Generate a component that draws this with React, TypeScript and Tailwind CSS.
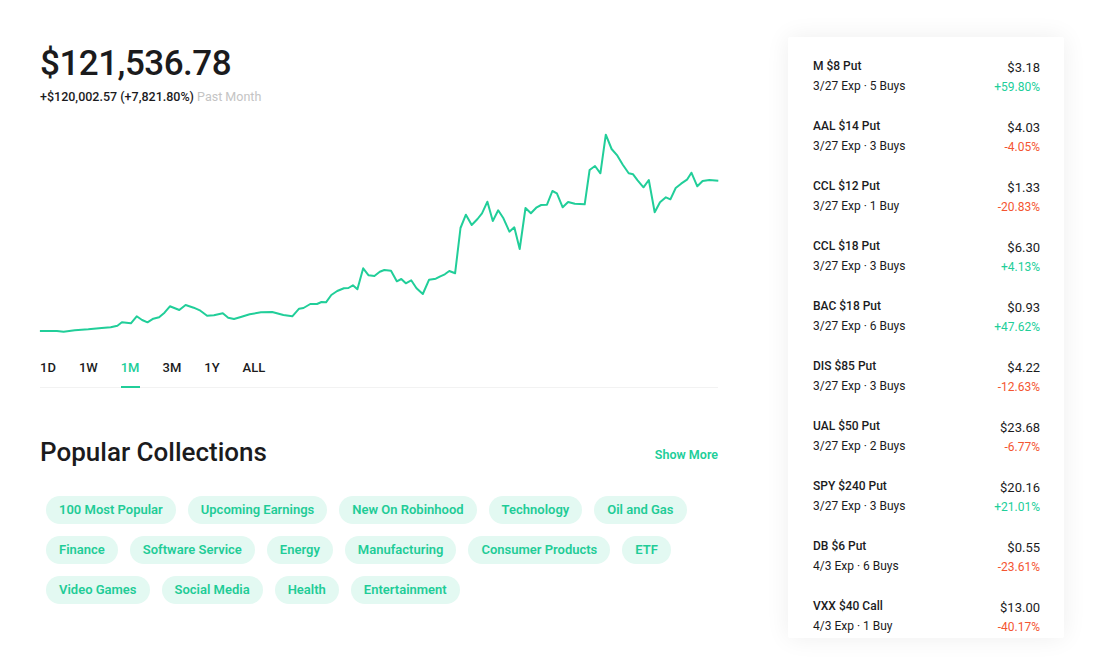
import React from "react";

// traced from the reference: x in 1/2.23 px, y in 1/3 px
const chartPoints: [number, number][] = [
  [22, 633], [60, 633], [75, 635], [100, 631], [130, 628], [160, 624], [180, 622], [195, 617], [205, 607],
  [225, 610], [238, 589], [250, 600], [262, 607], [275, 596], [288, 592], [300, 578], [312, 559], [333, 570],
  [347, 555], [365, 563], [380, 572], [395, 587], [410, 586], [430, 580], [442, 593], [455, 597], [470, 591],
  [490, 583], [515, 577], [540, 576], [565, 585], [585, 589], [600, 566], [610, 564], [625, 552], [640, 552],
  [650, 546], [660, 547], [672, 525], [685, 513], [700, 505], [710, 504], [720, 496], [730, 508], [743, 445],
  [755, 466], [768, 468], [780, 455], [790, 450], [805, 452], [818, 484], [828, 477], [838, 490], [850, 481],
  [862, 505], [876, 522], [890, 479], [905, 476], [915, 469], [925, 463], [935, 453], [948, 460], [960, 324],
  [972, 284], [985, 315], [998, 297], [1008, 280], [1020, 245], [1032, 303], [1044, 271], [1055, 293],
  [1069, 335], [1080, 322], [1092, 387], [1105, 264], [1117, 280], [1130, 262], [1140, 255], [1153, 254],
  [1165, 213], [1175, 220], [1188, 262], [1200, 246], [1215, 251], [1237, 253], [1248, 150], [1260, 138],
  [1272, 160], [1284, 44], [1297, 87], [1310, 107], [1322, 134], [1335, 160], [1345, 163], [1355, 181],
  [1368, 202], [1380, 180], [1393, 277], [1405, 247], [1418, 232], [1428, 238], [1440, 204], [1452, 191],
  [1465, 179], [1475, 158], [1488, 199], [1500, 183], [1515, 180], [1535, 182],
];

const ranges = ["1D", "1W", "1M", "3M", "1Y", "ALL"];

const collections = [
  ["100 Most Popular", "Upcoming Earnings", "New On Robinhood", "Technology", "Oil and Gas"],
  ["Finance", "Software Service", "Energy", "Manufacturing", "Consumer Products", "ETF"],
  ["Video Games", "Social Media", "Health", "Entertainment"],
];

interface Option {
  name: string;
  exp: string;
  price: string;
  change: string;
}

const options: Option[] = [
  { name: "M $8 Put", exp: "3/27 Exp · 5 Buys", price: "$3.18", change: "+59.80%" },
  { name: "AAL $14 Put", exp: "3/27 Exp · 3 Buys", price: "$4.03", change: "-4.05%" },
  { name: "CCL $12 Put", exp: "3/27 Exp · 1 Buy", price: "$1.33", change: "-20.83%" },
  { name: "CCL $18 Put", exp: "3/27 Exp · 3 Buys", price: "$6.30", change: "+4.13%" },
  { name: "BAC $18 Put", exp: "3/27 Exp · 6 Buys", price: "$0.93", change: "+47.62%" },
  { name: "DIS $85 Put", exp: "3/27 Exp · 3 Buys", price: "$4.22", change: "-12.63%" },
  { name: "UAL $50 Put", exp: "3/27 Exp · 2 Buys", price: "$23.68", change: "-6.77%" },
  { name: "SPY $240 Put", exp: "3/27 Exp · 3 Buys", price: "$20.16", change: "+21.01%" },
  { name: "DB $6 Put", exp: "4/3 Exp · 6 Buys", price: "$0.55", change: "-23.61%" },
  { name: "VXX $40 Call", exp: "4/3 Exp · 1 Buy", price: "$13.00", change: "-40.17%" },
];

function Chart() {
  const pts = chartPoints.map(([x, y]) => `${(x / 2.23 - 10).toFixed(1)},${(y / 3).toFixed(1)}`).join(" ");
  return (
    <svg viewBox="0 0 678 220" className="w-[678px] h-[220px] overflow-visible">
      <polyline points={pts} fill="none" stroke="#21ce99" strokeWidth={2} strokeLinejoin="round" />
    </svg>
  );
}

export default function App() {
  return (
    <div
      className="w-[1104px] h-[659px] bg-white overflow-hidden flex text-[#1b1b1d]"
      style={{ fontFamily: "Roboto, 'Liberation Sans', sans-serif" }}
    >
      <div className="w-[678px] ml-[40px] pt-[40px] flex flex-col">
        <div className="text-[35px] font-medium leading-[48px] tracking-[-0.5px]">$121,536.78</div>
        <div className="text-[12.5px] font-medium leading-[16px] mt-[1px]">
          +$120,002.57 (+7,821.80%) <span className="text-[#c4c4c4] font-normal">Past Month</span>
        </div>
        <div className="mt-[15px] h-[220px]">
          <Chart />
        </div>
        <div className="flex gap-[23px] text-[13px] font-medium h-[48px] items-start pt-[18px] border-b border-[#f2f2f2]">
          {ranges.map(r => (
            <div key={r} className={`relative h-full ${r === "1M" ? "text-[#21ce99]" : ""}`}>
              {r}
              {r === "1M" && <div className="absolute left-0 right-0 bottom-[-1px] h-[2px] bg-[#21ce99]" />}
            </div>
          ))}
        </div>
        <div className="flex items-center justify-between mt-[46px]">
          <h2 className="text-[26px] font-medium leading-[36px]">Popular Collections</h2>
          <span className="text-[12.5px] font-semibold text-[#21ce99] mt-[6px]">Show More</span>
        </div>
        <div className="mt-[26px] ml-[6px] flex flex-col gap-[12px]">
          {collections.map((row, i) => (
            <div key={i} className="flex gap-[12px]">
              {row.map(c => (
                <span
                  key={c}
                  className="h-[28px] px-[13px] rounded-full bg-[#e3f9f2] text-[#1fcc97] text-[13px] font-semibold flex items-center"
                >
                  {c}
                </span>
              ))}
            </div>
          ))}
        </div>
      </div>
      <div className="ml-[70px] mt-[37px] w-[276px] h-[601px] bg-white rounded-[2px] shadow-[0_0_24px_rgba(0,0,0,0.07)] overflow-hidden pt-[20px] pr-[24px] pl-[25px]">
        {options.map(o => (
          <div key={o.name} className="flex justify-between h-[60px] text-[12px]">
            <div className="flex flex-col">
              <span className="font-medium leading-[18px]">{o.name}</span>
              <span className="leading-[20px] mt-[1px]">{o.exp}</span>
            </div>
            <div className="flex flex-col items-end">
              <span className="text-[13px] leading-[18px] mt-[2px]">{o.price}</span>
              <span className={`leading-[20px] ${o.change.startsWith("+") ? "text-[#21ce99]" : "text-[#f45531]"}`}>
                {o.change}
              </span>
            </div>
          </div>
        ))}
      </div>
    </div>
  );
}
